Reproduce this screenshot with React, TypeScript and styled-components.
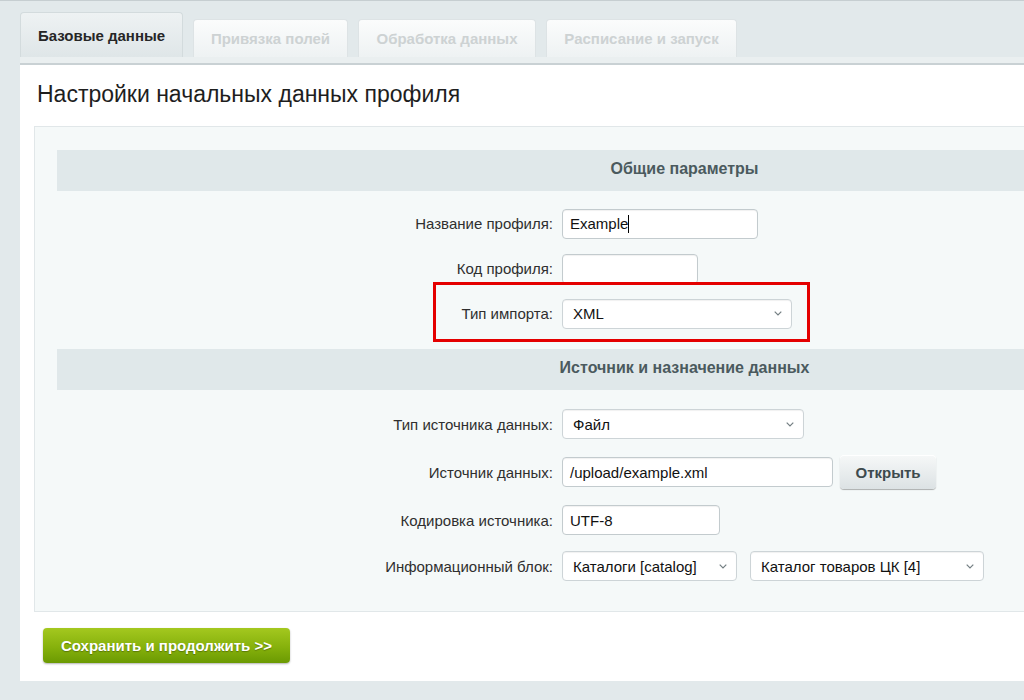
import React from 'react';
import styled, { createGlobalStyle } from 'styled-components';

const GlobalStyle = createGlobalStyle`
  html, body {
    margin: 0;
    padding: 0;
    background: #e2e9eb;
    overflow: hidden;
    font-family: 'Liberation Sans', Arial, sans-serif;
  }
`;

const tabs = [
  { title: 'Базовые данные', width: 163 },
  { title: 'Привязка полей', width: 155 },
  { title: 'Обработка данных', width: 178 },
  { title: 'Расписание и запуск', width: 191 },
];

const Chevron = () => (
  <svg width="8" height="5" viewBox="0 0 8 5" fill="none">
    <path d="M0.7 0.7l3.3 3.3 3.3-3.3" stroke="#747f83" strokeWidth="1.2" />
  </svg>
);

const App = () => {
  return (
    <>
      <GlobalStyle />
      <Page>
        <TabBar>
          {tabs.map((t, i) => (
            <Tab key={t.title} $active={i === 0} $width={t.width}>
              {t.title}
            </Tab>
          ))}
        </TabBar>
        <Content>
          <Title>Настройки начальных данных профиля</Title>
          <Panel>
            <SectionHeader>Общие параметры</SectionHeader>
            <SectionBody $top={10} $bottom={13} $pad={7.5}>
              <Row>
                <Label>Название профиля:</Label>
                <Cell>
                  <TextBox $width={196}>
                    Example
                    <Caret />
                  </TextBox>
                </Cell>
              </Row>
              <Row>
                <Label>Код профиля:</Label>
                <Cell>
                  <TextBox $width={136} />
                </Cell>
              </Row>
              <Row>
                <Highlight />
                <Label>Тип импорта:</Label>
                <Cell>
                  <Select $width={230}>
                    XML
                    <Chevron />
                  </Select>
                </Cell>
              </Row>
            </SectionBody>

            <SectionHeader>Источник и назначение данных</SectionHeader>
            <SectionBody $top={11} $bottom={22} $pad={8}>
              <Row>
                <Label>Тип источника данных:</Label>
                <Cell>
                  <Select $width={242}>
                    Файл
                    <Chevron />
                  </Select>
                </Cell>
              </Row>
              <Row>
                <Label>Источник данных:</Label>
                <Cell>
                  <TextBox $width={271}>/upload/example.xml</TextBox>
                  <GrayButton>Открыть</GrayButton>
                </Cell>
              </Row>
              <Row>
                <Label>Кодировка источника:</Label>
                <Cell>
                  <TextBox $width={158}>UTF-8</TextBox>
                </Cell>
              </Row>
              <Row>
                <Label>Информационный блок:</Label>
                <Cell>
                  <Select $width={175}>
                    Каталоги [catalog]
                    <Chevron />
                  </Select>
                  <Select $width={234}>
                    Каталог товаров ЦК [4]
                    <Chevron />
                  </Select>
                </Cell>
              </Row>
            </SectionBody>
          </Panel>
          <Footer>
            <SaveButton>Сохранить и продолжить &gt;&gt;</SaveButton>
          </Footer>
        </Content>
      </Page>
    </>
  );
};

export default App;

const Page = styled.div`
  border-top: 1px solid #c6ced1;
  padding: 11px 0 20px 20px;
  width: 1330px;
`;

const TabBar = styled.div`
  display: flex;
  align-items: flex-end;
  gap: 10px;
  height: 45px;
`;

const Tab = styled.div<{ $active?: boolean; $width: number }>`
  box-sizing: border-box;
  width: ${(p) => p.$width}px;
  height: ${(p) => (p.$active ? 45 : 38)}px;
  display: flex;
  align-items: center;
  justify-content: center;
  padding-bottom: ${(p) => (p.$active ? 0 : 1)}px;
  border: 1px solid ${(p) => (p.$active ? '#d3dbdd' : '#dde3e5')};
  border-bottom: none;
  border-radius: 4px 4px 0 0;
  background: ${(p) =>
    p.$active
      ? 'linear-gradient(#eef2f3, #dfe6e8)'
      : 'linear-gradient(#fbfcfc, #eef2f3)'};
  color: ${(p) => (p.$active ? '#262626' : '#cdd2d3')};
  font-size: 15px;
  font-weight: bold;
`;

const Content = styled.div`
  background: #fff;
  border-top: 6px solid #eaeff0;
  box-shadow: inset 0 2px 0 #c9d1d4;
  padding: 18px 14px 18px 14px;
`;

const Title = styled.h1`
  margin: 0 0 18px 3px;
  font-size: 23px;
  font-weight: normal;
  line-height: 27px;
  color: #1e1e1e;
`;

const Panel = styled.div`
  background: #f5f9f9;
  border: 1px solid #e1e7e9;
  padding: 23px 23px 0 22px;
`;

const SectionHeader = styled.div`
  height: 41px;
  box-sizing: border-box;
  padding-bottom: 4px;
  line-height: 37px;
  background: #e0e8ea;
  text-align: center;
  font-size: 16px;
  font-weight: bold;
  color: #4b5a5e;
`;

const SectionBody = styled.div<{ $top: number; $bottom: number; $pad: number }>`
  --row-pad: ${(p) => p.$pad}px;
  padding: ${(p) => p.$top}px 0 ${(p) => p.$bottom}px;
`;

const Row = styled.div`
  position: relative;
  display: grid;
  grid-template-columns: 500px 1fr;
  align-items: center;
  padding: var(--row-pad) 0;
`;

const Label = styled.div`
  text-align: right;
  padding-right: 4px;
  font-size: 15px;
  color: #2f2f2f;
`;

const Cell = styled.div`
  display: flex;
  align-items: center;
  gap: 7px;
  padding-left: 5px;
`;

const TextBox = styled.div<{ $width: number }>`
  box-sizing: border-box;
  width: ${(p) => p.$width}px;
  height: 30px;
  padding: 0 7px;
  display: flex;
  align-items: center;
  background: #fff;
  border: 1px solid #c3cbce;
  border-radius: 4px;
  box-shadow: inset 0 1px 1px rgba(0, 0, 0, 0.06);
  font-size: 15px;
  color: #111;
  white-space: nowrap;
  overflow: hidden;
`;

const Caret = styled.span`
  display: inline-block;
  width: 1px;
  height: 18px;
  background: #000;
`;

const Select = styled(TextBox)`
  justify-content: space-between;
  padding: 0 9px 0 10px;
  border-color: #cdd4d7;
  & + & {
    margin-left: 6px;
  }
`;

const Highlight = styled.div`
  position: absolute;
  left: 376px;
  top: -9px;
  width: 377px;
  height: 60px;
  box-sizing: border-box;
  border: 3px solid #e40000;
  pointer-events: none;
`;

const GrayButton = styled.button`
  height: 34px;
  width: 96px;
  border: none;
  border-radius: 4px;
  background: linear-gradient(#f6f8f8, #dce2e4);
  box-shadow: 0 1px 1px rgba(0, 0, 0, 0.3), inset 0 1px 0 #fff;
  font-family: inherit;
  font-size: 15px;
  font-weight: bold;
  color: #3d4a4e;
  cursor: pointer;
`;

const Footer = styled.div`
  padding: 16px 0 0 9px;
`;

const SaveButton = styled.button`
  height: 35px;
  width: 247px;
  border: none;
  border-radius: 4px;
  background: linear-gradient(#a4c81f, #86b10c 55%, #6b9a02);
  box-shadow: 0 1px 2px rgba(0, 0, 0, 0.3);
  font-family: inherit;
  font-size: 15px;
  font-weight: bold;
  color: #fff;
  text-shadow: 0 1px 1px rgba(0, 0, 0, 0.3);
  cursor: pointer;
`;
